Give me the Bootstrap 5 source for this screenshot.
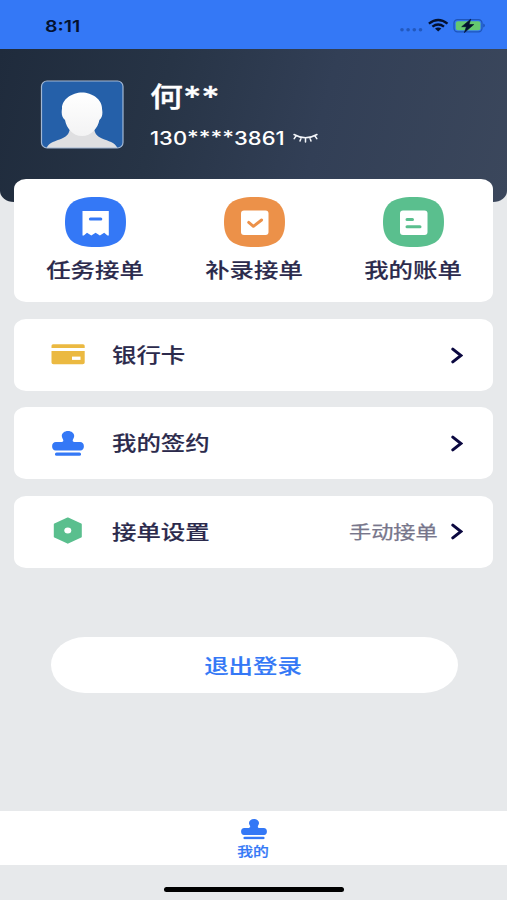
<!DOCTYPE html>
<html lang="zh-CN">
<head>
<meta charset="utf-8">
<meta name="viewport" content="width=device-width, initial-scale=1">
<title>我的</title>
<link href="https://cdn.jsdelivr.net/npm/bootstrap@5.3.0/dist/css/bootstrap.min.css" rel="stylesheet">
<style>
body{background:#e7e9eb;font-family:Inter,"Noto Sans CJK SC",sans-serif;color:#2b2a4c;overflow:hidden}
svg{display:block;flex:none}
.screen{height:900px}
.statusbar{height:49px;background:#3478f6;color:#04112f;padding:3px 22px 0 45px}
.clock{font-size:16px;font-weight:600;line-height:1}
/* glyphs are wider than their nominal shape across the whole interface */
.wide{display:inline-block;transform:scaleX(1.22);transform-origin:left center;white-space:nowrap;line-height:1}
.wide.mid{transform-origin:center}
.wide.end{transform-origin:right center}
.profile{height:153px;background:linear-gradient(105deg,#1f2b3c 0%,#273446 32%,#323f56 62%,#3b475c 100%);border-radius:0 0 14px 14px/0 0 11px 11px;padding:31px 40px 0 40px}
.info{margin-left:26px}
.user-name{font-size:27px;font-weight:500;margin-top:2px;font-family:"Noto Sans CJK SC",sans-serif;-webkit-text-stroke:.3px currentColor}
.user-name span{vertical-align:0;font-family:Inter,sans-serif;font-size:29px;line-height:0}
.phone{font-size:18px;font-weight:500;width:143px}
.phone .stars{vertical-align:1px;line-height:0;font-size:18.500px}
.phone-row{margin-top:13px;height:24px}
.panel{background:#fff;border-radius:12px/10px;margin:0 14px}
.services{height:123px;margin-top:-23px;padding:18px 0 0 2px}
.service{width:159px}
.label-text{font-size:20px;font-weight:500;-webkit-text-stroke:.15px currentColor;padding-top:2px}
.service .label-text{margin:12px 2px 0 0}
.entry{height:72px;padding:0 30px 0 37px}
.entry-icon{width:61px}
.value-text{font-size:18.2px;color:#77768b;margin-right:13px;-webkit-text-stroke:.25px currentColor}
.entries{gap:16.4px;margin-top:17px}
.logout{width:407px;height:56px;border-radius:34px/28px;background:#fff;color:#3478f6;margin:69.2px 0 0 1px;border:0}
.logout .label-text{margin:2px 2px 0 0}
.tabbar{height:54px;margin-top:118px;background:#fff;color:#3478f6;padding-top:8px}
.tab-text{font-size:13px;font-weight:500;margin-top:5px;-webkit-text-stroke:.2px currentColor}
.home-line{width:180px;height:5px;border-radius:3px;background:#000;margin:22px 0 0 1px}
</style>
<script src="https://cdn.jsdelivr.net/npm/bootstrap@5.3.0/dist/js/bootstrap.bundle.min.js"></script>
</head>
<body>
<svg width="0" height="0" class="position-absolute">
  <symbol id="stamp" viewBox="0 0 32 25" preserveAspectRatio="none">
    <path fill="#3478f6" d="M16 0c3.600 0 6.200 2.200 6.200 5 0 1.800-1.500 3.100-1.500 4.600 0 1 .5 1.400 1.500 1.400h5.800c2.500 0 3.900 1.700 3.900 4.200s-1.300 4.200-3.500 4.200H3.600C1.400 19.400.1 17.700.1 15.200S1.500 11 4 11h5.800c1 0 1.500-.4 1.500-1.400 0-1.500-1.500-2.800-1.500-4.600C9.800 2.200 12.400 0 16 0Z"/>
    <rect x="3" y="21.500" width="26" height="3.300" rx="1.500" fill="#3478f6"/>
  </symbol>
  <symbol id="chevron" viewBox="0 0 12 17"><path d="M1.800 2.100 10 8.500 1.800 14.900" fill="none" stroke="#0b0840" stroke-width="3" stroke-linecap="round"/></symbol>
</svg>
<div class="screen d-flex flex-column">
  <header class="statusbar d-flex align-items-center justify-content-between">
    <span class="wide clock">8:11</span>
    <svg width="86" height="18" viewBox="0 0 86 18">
      <g fill="#2258be"><circle cx="3" cy="12.800" r="1.800"/><circle cx="9.100" cy="12.800" r="1.800"/><circle cx="15.300" cy="12.800" r="1.800"/><circle cx="21.500" cy="12.800" r="1.800"/></g>
      <g fill="none" stroke="#04112f" stroke-width="2.400"><path d="M29.900 6.600Q39.200-.6 48.500 6.600"/><path d="M33.400 9.600Q39.200 5.200 45 9.600"/></g>
      <path d="M36 11.600Q39.200 9.200 42.400 11.600L39.200 14.400Z" fill="#04112f"/>
      <rect x="55" y="2.600" width="28" height="12.200" rx="3.500" fill="none" stroke="#1e56ba" stroke-width="1.300"/>
      <rect x="56.800" y="4.200" width="24.600" height="9" rx="2" fill="#65c96f"/>
      <path d="M84.200 6.600q1.700.3 1.700 2t-1.700 2Z" fill="#1e56ba"/>
      <path d="M71.700 2.200 62.700 9.700h4.700l-2 5.900 9.400-8.100h-4.800Z" fill="#04112f" stroke="#04112f" stroke-width=".6" stroke-linejoin="round"/>
    </svg>
  </header>

  <section class="profile d-flex align-items-start">
    <svg width="84" height="69" viewBox="0 0 84 69">
      <defs>
        <clipPath id="frame"><rect x="1.500" y="1" width="81.500" height="67" rx="5.500"/></clipPath>
        <linearGradient id="face" x2="0" y2="1"><stop stop-color="#fff"/><stop offset="1" stop-color="#f3f3f4"/></linearGradient>
      </defs>
      <rect x="1.500" y="1" width="81.500" height="67" rx="5.500" fill="#2560a9"/>
      <g clip-path="url(#frame)">
        <path d="M30 46c0 7-2.500 10-8 12.500C15 61.500 9 62 6 69h72c-3-7-9-7.500-16-10.500C56.500 56 54 53 54 46Z" fill="#dfdfe1"/>
        <path d="M42 12.500c10 0 20 7 20 15.500 0 1.500.4 2.300.4 4.500 0 3-.8 5.500-3 7.500-1.500 8-8 16-17.400 16S26.500 48 25 40c-2.200-2-3.300-4.500-3.300-7.500 0-2.200.3-3 .3-4.500 0-8.500 10-15.500 20-15.500Z" fill="url(#face)"/>
      </g>
      <rect x="1.500" y="1" width="81.500" height="67" rx="5.500" fill="none" stroke="#a3b8d4" stroke-width="1.200"/>
    </svg>
    <div class="info text-white">
      <div><span class="wide user-name">何<span>**</span></span></div>
      <div class="phone-row d-flex align-items-center">
        <div class="phone"><span class="wide">130<span class="stars">****</span>3861</span></div>
        <svg width="25" height="12" viewBox="0 0 25 12"><path d="M1 2.500Q12.500 9 24 2.500M3.200 3.700 1.200 6.600M8.300 5.500 7 9M12.500 6v4M16.700 5.500 18 9M21.800 3.700 23.800 6.600" fill="none" stroke="#f4f6fa" stroke-width="1.500" stroke-linecap="round"/></svg>
      </div>
    </div>
  </section>

  <nav class="panel services d-flex justify-content-center">
    <div class="service d-flex flex-column align-items-center">
      <svg width="61" height="50" viewBox="0 0 61 50"><path d="M30.500 0C52 0 61 7 61 25S52 50 30.500 50 0 43 0 25 9 0 30.500 0Z" fill="#3478f6"/><path d="M17.500 14h26.300v24.500h-1.300l-3.300-2.700-4.300 2.700-4.300-2.700-4.300 2.700-4.300-2.700-3.200 2.700h-1.300Z" fill="#fff"/><path d="M25.400 22h10.400" stroke="#3478f6" stroke-width="3" stroke-linecap="round"/></svg>
      <span class="wide mid label-text">任务接单</span>
    </div>
    <div class="service d-flex flex-column align-items-center">
      <svg width="61" height="50" viewBox="0 0 61 50"><path d="M30.500 0C52 0 61 7 61 25S52 50 30.500 50 0 43 0 25 9 0 30.500 0Z" fill="#ec9149"/><rect x="17" y="13.500" width="27.500" height="24.500" rx="3" fill="#fff"/><path d="m24.700 25.400 4.700 3.900 8.200-6.300" fill="none" stroke="#ec9149" stroke-width="2.900" stroke-linecap="round" stroke-linejoin="round"/></svg>
      <span class="wide mid label-text">补录接单</span>
    </div>
    <div class="service d-flex flex-column align-items-center">
      <svg width="61" height="50" viewBox="0 0 61 50"><path d="M30.500 0C52 0 61 7 61 25S52 50 30.500 50 0 43 0 25 9 0 30.500 0Z" fill="#5abf8e"/><rect x="17" y="13.500" width="27.500" height="24.500" rx="3" fill="#fff"/><path d="M24 22.400h5.500M24 29.800h13" stroke="#5abf8e" stroke-width="3" stroke-linecap="round"/></svg>
      <span class="wide mid label-text">我的账单</span>
    </div>
  </nav>

  <main class="entries d-flex flex-column">
    <div class="panel entry d-flex align-items-center">
      <div class="entry-icon"><svg width="34" height="22" viewBox="0 0 34 22"><path d="M2 .3h30q1.700 0 1.700 1.500v2.300H.5V1.800Q.5.300 2 .300ZM.5 7h33.200v11.500q0 1.800-2 1.800H2.500q-2 0-2-1.800Z" fill="#ebb941"/><rect x="21" y="12.600" width="8.500" height="3.300" fill="#fff"/></svg></div>
      <span class="wide label-text me-auto">银行卡</span>
      <svg width="12" height="17"><use href="#chevron"/></svg>
    </div>
    <div class="panel entry d-flex align-items-center">
      <div class="entry-icon"><svg width="34" height="25" viewBox="0 0 34 25"><use href="#stamp" x="1" width="32" height="25"/></svg></div>
      <span class="wide label-text me-auto">我的签约</span>
      <svg width="12" height="17"><use href="#chevron"/></svg>
    </div>
    <div class="panel entry d-flex align-items-center">
      <div class="entry-icon"><svg width="34" height="29" viewBox="0 0 34 29"><path d="M16.800 1.500 29.800 7.500v12.200L16.800 25.700 3.800 19.700V7.500Z" fill="#5abf8e" stroke="#5abf8e" stroke-width="2" stroke-linejoin="round"/><ellipse cx="16.800" cy="13.600" rx="3.500" ry="3" fill="#fff"/></svg></div>
      <span class="wide label-text me-auto">接单设置</span>
      <span class="wide end value-text">手动接单</span>
      <svg width="12" height="17"><use href="#chevron"/></svg>
    </div>
  </main>

  <button class="logout align-self-center d-flex align-items-center justify-content-center"><span class="wide mid label-text">退出登录</span></button>

  <footer class="tabbar d-flex flex-column align-items-center">
    <svg width="26" height="21" viewBox="0 0 26 21"><use href="#stamp" width="26" height="20.500"/></svg>
    <span class="wide mid tab-text">我的</span>
  </footer>
  <div class="home-line align-self-center"></div>
</div>
</body>
</html>
